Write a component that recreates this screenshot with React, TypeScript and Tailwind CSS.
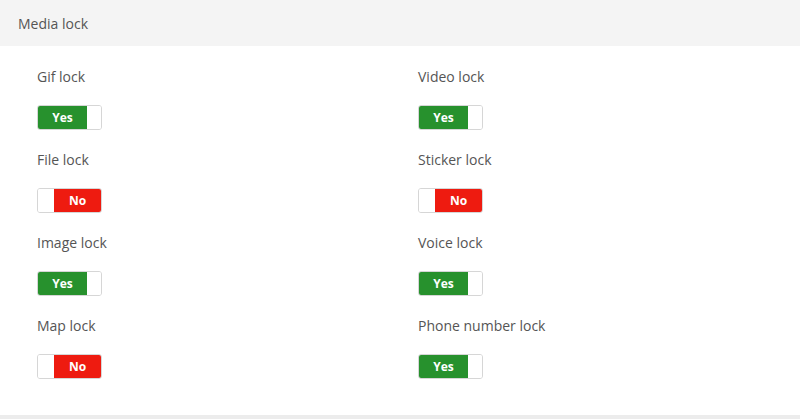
import React from "react";

const locks: { label: string; on: boolean }[] = [
  { label: "Gif lock", on: true },
  { label: "Video lock", on: true },
  { label: "File lock", on: false },
  { label: "Sticker lock", on: false },
  { label: "Image lock", on: true },
  { label: "Voice lock", on: true },
  { label: "Map lock", on: false },
  { label: "Phone number lock", on: true },
];

const Toggle = ({ on }: { on: boolean }) => (
  <div className="flex h-[25px] w-[65px] overflow-hidden rounded-[3px] border border-[#d6d6d6]">
    {on ? (
      <>
        <div className="flex w-[49px] items-center justify-center bg-[#27912d] text-[12px] font-bold text-white">Yes</div>
        <div className="flex-1 bg-white" />
      </>
    ) : (
      <>
        <div className="w-[16px] bg-white" />
        <div className="flex flex-1 items-center justify-center bg-[#ee1b10] text-[12px] font-bold text-white">No</div>
      </>
    )}
  </div>
);

export default function App() {
  return (
    <div className="flex h-[419px] w-[800px] flex-col bg-white font-['Open_Sans',sans-serif] text-[#555]">
      <div className="flex h-[46px] items-center bg-[#f4f4f4] pl-[18px] text-[14px]">Media lock</div>
      <div className="grid flex-1 grid-cols-[381px_1fr] content-start gap-y-[20px] pl-[37px] pt-[21px]">
        {locks.map((l) => (
          <div key={l.label} className="flex flex-col gap-[18px]">
            <div className="h-[20px] text-[14px] leading-[20px]">{l.label}</div>
            <Toggle on={l.on} />
          </div>
        ))}
      </div>
      <div className="h-[4px] bg-[#ececec]" />
    </div>
  );
}
